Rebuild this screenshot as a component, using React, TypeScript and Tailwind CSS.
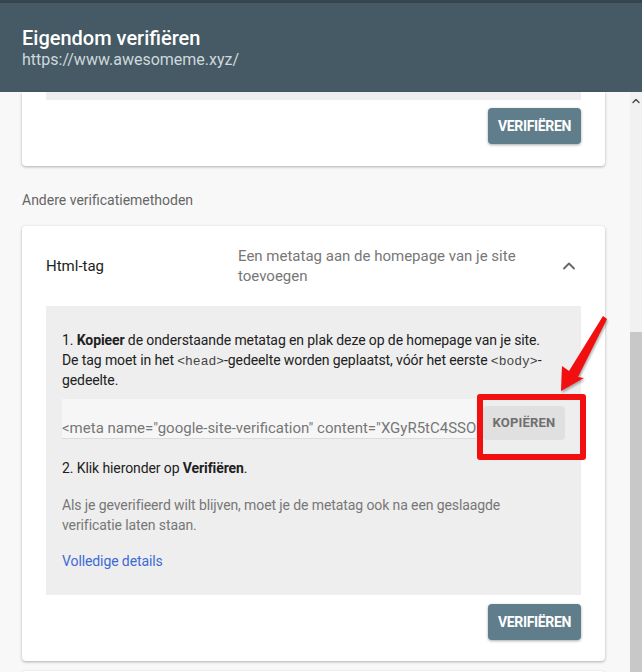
import { ChevronUp } from "lucide-react";

function VerifyButton() {
  return (
    <button className="h-9 w-[93px] rounded bg-[#607d8b] text-[14px] font-bold tracking-tight text-white shadow-[0_1px_3px_rgba(0,0,0,0.35)]">
      VERIFIËREN
    </button>
  );
}

const codeCls = "font-['Liberation_Mono',monospace] text-[13px] leading-none tracking-normal text-[#444]";

export default function App() {
  return (
    <div className="relative flex h-[672px] w-[642px] flex-col overflow-hidden bg-[#f8f8f8] font-['Roboto',sans-serif]">
      {/* Title bar */}
      <header className="h-[92px] shrink-0 border-t-[3px] border-[#35454d] bg-[#455a64] px-[22px] pt-[23px]">
        <h1 className="text-[20px] font-medium leading-6 text-white">Eigendom verifiëren</h1>
        <p className="text-[16px] leading-5 text-[#cfd8dc]">https://www.awesomeme.xyz/</p>
      </header>

      <div className="flex min-h-0 flex-1">
        <main className="min-w-0 flex-1 pl-[22px] pr-[25px]">
          {/* Card cut off by the header */}
          <div className="rounded-b bg-white shadow-[0_1px_3px_rgba(0,0,0,0.3)]">
            <div className="mx-6 h-2 bg-[#eeeeee]" />
            <div className="flex justify-end px-6 pb-[22px] pt-2">
              <VerifyButton />
            </div>
          </div>

          <p className="mb-4 mt-6 text-[14px] leading-5 text-[#666]">Andere verificatiemethoden</p>

          <div className="rounded bg-white shadow-[0_1px_3px_rgba(0,0,0,0.3)]">
            <div className="flex h-20 items-center px-6">
              <div className="w-[192px] text-[15px] text-[#212121]">Html-tag</div>
              <div className="min-w-0 flex-1 pr-4 text-[15px] leading-5 text-[#777]">
                Een metatag aan de homepage van je site toevoegen
              </div>
              <div className="flex w-6 justify-center">
                <ChevronUp className="h-5 w-5 text-[#666]" strokeWidth={2.2} />
              </div>
            </div>

            <div className="mx-6 bg-[#eeeeee] px-4 pb-6 pt-6 text-[14px] leading-5 tracking-[-0.1px] text-[#212121]">
              <p>
                1. <b className="font-bold">Kopieer</b> de onderstaande metatag en plak deze op de homepage van je site.
                <br />
                De tag moet in het <code className={codeCls}>&lt;head&gt;</code>-gedeelte worden geplaatst, vóór het
                eerste <code className={codeCls}>&lt;body&gt;</code>-
                <br />
                gedeelte.
              </p>

              <div className="mt-[9px] flex items-start gap-[7px]">
                <div className="flex h-10 min-w-0 flex-1 items-end overflow-hidden whitespace-nowrap border-b border-[#dcdcdc] bg-[#f6f6f6] text-[15px] leading-5 tracking-normal text-[#777]">
                  &lt;meta name="google-site-verification" content="XGyR5tC4SSOk8bWq2Fv3" /&gt;
                </div>
                <button className="mt-[7px] h-[34px] w-[82px] shrink-0 rounded-sm bg-[#e0e0e0] text-[13px] font-bold tracking-[0.2px] text-[#6f6f6f]">
                  KOPIËREN
                </button>
              </div>

              <p className="mt-[18px]">
                2. Klik hieronder op <b className="font-bold">Verifiëren</b>.
              </p>
              <p className="mt-[17px] text-[#777]">
                Als je geverifieerd wilt blijven, moet je de metatag ook na een geslaagde
                <br />
                verificatie laten staan.
              </p>
              <p className="mt-4 text-[#3d6ad6]">Volledige details</p>
            </div>

            <div className="flex justify-end px-6 pb-[21px] pt-[9px]">
              <VerifyButton />
            </div>
          </div>

          <div className="mt-[10px] h-10 rounded-t bg-white shadow-[0_1px_3px_rgba(0,0,0,0.25)]" />
        </main>

        {/* Scrollbar */}
        <div className="flex w-3 shrink-0 flex-col bg-[#f1f1f1]">
          <div className="flex h-[18px] items-center justify-center">
            <ChevronUp className="h-3 w-3 text-[#505050]" strokeWidth={3} />
          </div>
          <div className="mt-[222px] flex-1 bg-[#c8c8c8]" />
        </div>
      </div>

      {/* Annotation overlay */}
      <div className="absolute left-[477px] top-[394px] h-[66px] w-[109px] rounded-[3px] border-[6px] border-[#f10f0f]" />
      <svg className="absolute left-0 top-0" width="642" height="672" viewBox="0 0 642 672">
        <polygon
          points="603,316 607,319 578,377 584,378 561,391 562,366 569,371"
          fill="#f10f0f"
          style={{ filter: "drop-shadow(1px 2px 1px rgba(0,0,0,0.3))" }}
        />
      </svg>
    </div>
  );
}
